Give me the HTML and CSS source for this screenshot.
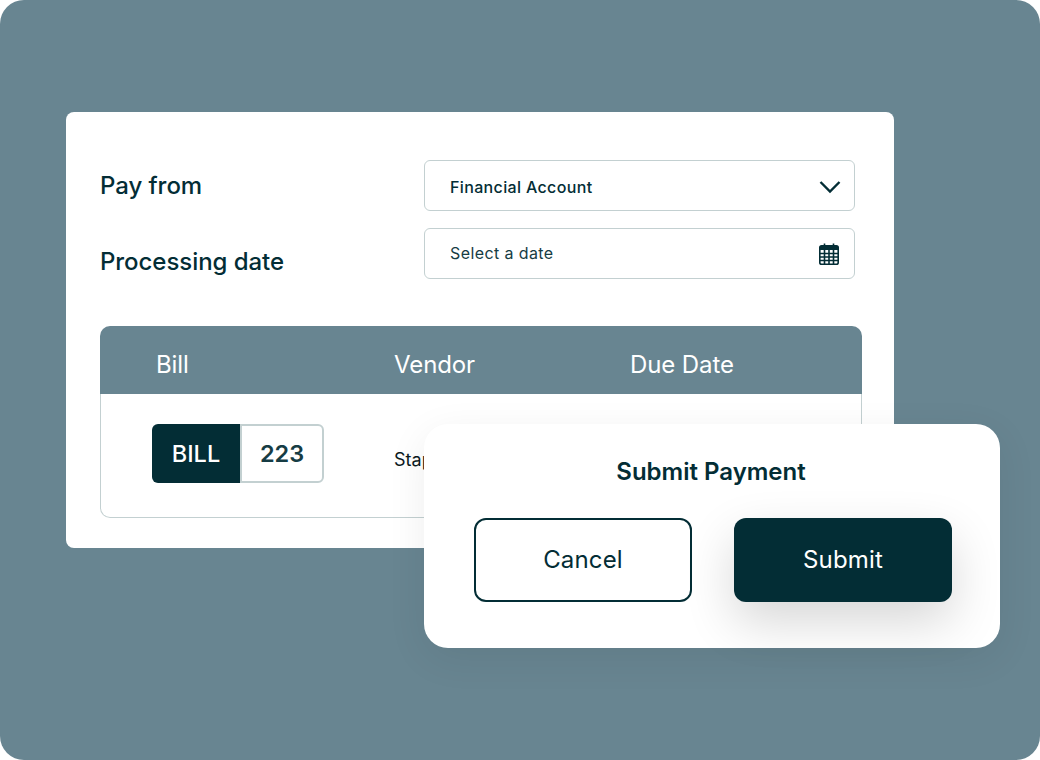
FILE: index.html
```html
<!DOCTYPE html>
<html lang="en">
<head>
<meta charset="utf-8">
<title>Submit Payment</title>
<link rel="stylesheet" href="styles.css">
</head>
<body>
<main class="stage">
  <section class="card">
    <div class="form">
      <div class="labels">
        <div class="label">Pay from</div>
        <div class="label label-date">Processing date</div>
      </div>
      <div class="fields">
        <div class="field field-strong">
          <span>Financial Account</span>
          <svg class="chev" width="22" height="14" viewBox="0 0 22 14" aria-hidden="true"><path d="M1.5 2 L11 11.5 L20.5 2" fill="none" stroke="#032d35" stroke-width="2.4"/></svg>
        </div>
        <div class="field field-date">
          <span>Select a date</span>
          <svg class="cal" width="20" height="22" viewBox="0 0 20 22" aria-hidden="true">
            <path d="M5.5 0.5V5M14.5 0.5V5" stroke="#032d35" stroke-width="1.6" fill="none"/>
            <rect x="0.8" y="2.8" width="18.4" height="18.4" rx="1.8" fill="none" stroke="#032d35" stroke-width="1.6"/>
            <rect x="1" y="3" width="18" height="4" fill="#032d35"/>
            <path d="M1 10.5H19M1 14H19M1 17.5H19M5.5 7V21M10 7V21M14.5 7V21" stroke="#032d35" stroke-width="1.6" fill="none"/>
          </svg>
        </div>
      </div>
    </div>
    <div class="table">
      <div class="thead">
        <div>Bill</div>
        <div>Vendor</div>
        <div>Due Date</div>
      </div>
      <div class="tbody">
        <div class="tag"><span class="tag-key">BILL</span><span class="tag-val">223</span></div>
        <div class="vendor">Staples</div>
      </div>
    </div>
  </section>
  <section class="modal">
    <h2 class="modal-title">Submit Payment</h2>
    <div class="actions">
      <button class="btn btn-outline" type="button">Cancel</button>
      <button class="btn btn-solid" type="button">Submit</button>
    </div>
  </section>
</main>
</body>
</html>
```
FILE: styles.css
```css
* { box-sizing: border-box; }
html, body { margin: 0; padding: 0; background: #fff; }
body { font-family: Inter, "Liberation Sans", sans-serif; color: #032d35; }

.stage {
  position: relative;
  width: 1040px;
  height: 760px;
  padding: 112px 146px 0 66px;
  background: #688591;
  border-radius: 24px;
  overflow: hidden;
}

.card {
  height: 436px;
  padding: 48px 32px 30px 34px;
  background: #fff;
  border-radius: 8px;
}

.form { display: flex; justify-content: space-between; padding-right: 7px; }
.labels { padding-top: 8px; }
.label { font-size: 24px; line-height: 36px; font-weight: 500; letter-spacing: -0.05px; }
.label-date { margin-top: 40px; }

.fields { display: flex; flex-direction: column; gap: 17px; width: 431px; }
.field {
  display: flex;
  align-items: center;
  justify-content: space-between;
  height: 51px;
  padding: 0 13px 0 25px;
  border: 1px solid #c3d0d1;
  border-radius: 6px;
  font-size: 16px;
  color: #163c44;
}
.field-strong { font-weight: 500; color: #032d35; padding-top: 2px; letter-spacing: 0.35px; }
.field-date { letter-spacing: 0.4px; padding-bottom: 2px; padding-right: 15px; }
.cal { margin-top: 2px; }

.table {
  height: 192px;
  margin-top: 46px;
  display: flex;
  flex-direction: column;
}
.thead {
  display: grid;
  grid-template-columns: 238px 236px 1fr;
  align-items: center;
  height: 68px;
  padding: 8px 0 0 56px;
  background: #688591;
  border-radius: 10px 10px 0 0;
  color: #fff;
  font-size: 24px;
  font-weight: 400;
  letter-spacing: -0.1px;
}
.tbody {
  flex: 1;
  display: grid;
  grid-template-columns: 242px 1fr;
  align-items: start;
  padding: 30px 0 0 51px;
  border: 1px solid #c3d0d1;
  border-top: 0;
  border-radius: 0 0 10px 10px;
}
.tag { display: flex; width: 172px; height: 59px; font-size: 23.5px; font-weight: 600; }
.tag-key {
  display: flex;
  align-items: center;
  justify-content: center;
  width: 88px;
  background: #032d35;
  color: #fff;
  border-radius: 6px 0 0 6px;
  font-weight: 500;
}
.tag-val {
  display: flex;
  align-items: center;
  justify-content: center;
  flex: 1;
  border: 2px solid #c3d0d1;
  border-radius: 0 6px 6px 0;
  color: #163c44;
}
.vendor { font-size: 18px; line-height: 24px; color: #0b1a1e; padding-top: 24px; }

.modal {
  position: absolute;
  left: 424px;
  top: 424px;
  width: 576px;
  height: 224px;
  padding: 32px 48px 0 50px;
  background: #fff;
  border-radius: 24px;
  box-shadow: 0 10px 40px rgba(0, 0, 0, 0.07);
}
.modal-title {
  margin: 0;
  padding-right: 4px;
  font-size: 24px;
  line-height: 32px;
  font-weight: 600;
  text-align: center;
}
.actions { display: flex; justify-content: space-between; margin-top: 30px; }
.btn {
  width: 218px;
  height: 84px;
  padding: 0 0 2px;
  border-radius: 12px;
  font-family: inherit;
  font-size: 24px;
  font-weight: 400;
  letter-spacing: 0.15px;
}
.btn-outline { background: #fff; color: #032d35; border: 2px solid #032d35; }
.btn-solid {
  background: #032d35;
  color: #fff;
  border: 0;
  box-shadow: 0 20px 50px rgba(0, 0, 0, 0.16);
}
```
